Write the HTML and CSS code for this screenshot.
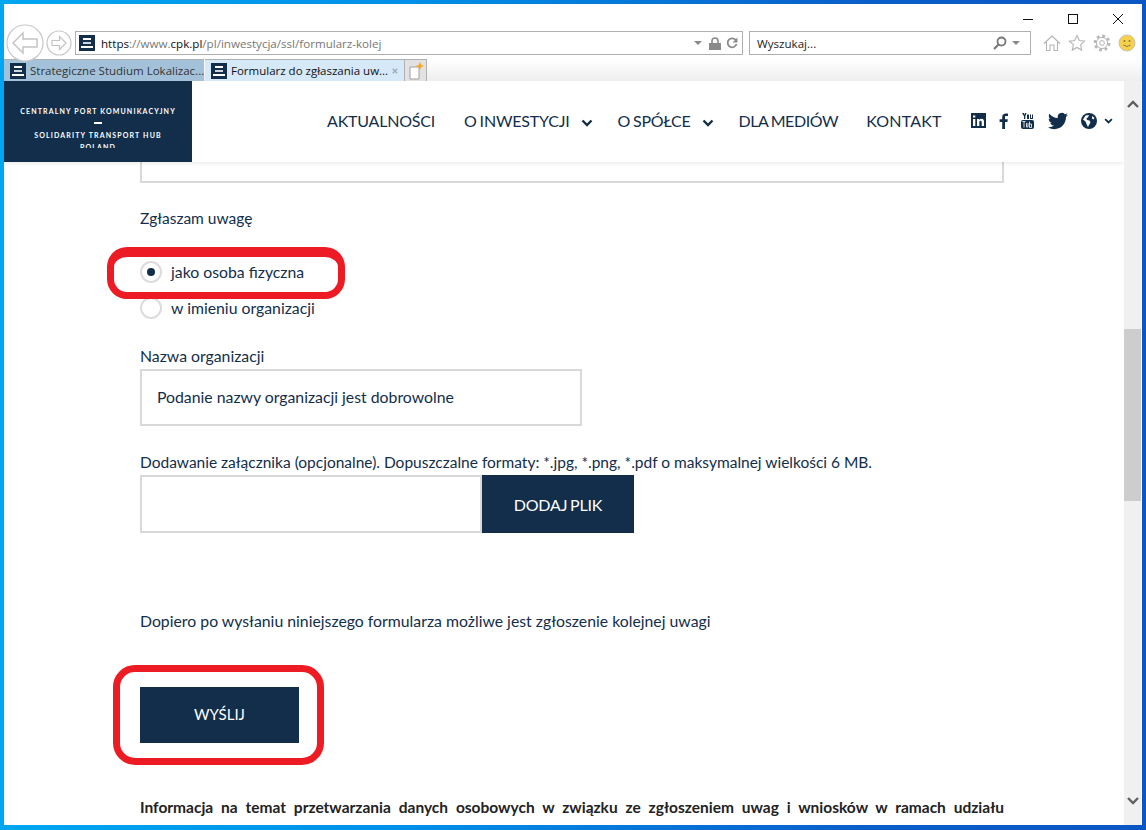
FILE: index.html
```html
<!DOCTYPE html>
<html lang="pl">

<head>
    <meta charset="UTF-8">
    <title>Formularz do zgłaszania uwag</title>
    <link rel="stylesheet" href="styles.css">
</head>

<body>
    <svg class="defs" width="0" height="0">
        <symbol id="favicon" viewBox="0 0 16 16">
            <rect width="16" height="16" fill="#122e4b" />
            <rect x="4" y="3" width="8" height="2" fill="#fff" />
            <rect x="4" y="7" width="8" height="2" fill="#cfd6dd" />
            <rect x="2" y="11" width="12" height="2" fill="#fff" />
        </symbol>
        <symbol id="chevron" viewBox="0 0 12 8">
            <path d="M1.5 1.5 6 6l4.5-4.5" fill="none" stroke="#122e4b" stroke-width="2.4" />
        </symbol>
    </svg>

    <div class="window">
        <!--browser toolbar-->
        <div class="chrome">
            <div class="caption">
                <svg class="caption-icon" viewBox="0 0 10 10"><path d="M0 5.5h10" stroke="#111" fill="none" /></svg>
                <svg class="caption-icon" viewBox="0 0 10 10"><rect x=".5" y=".5" width="9" height="9" stroke="#111" fill="none" /></svg>
                <svg class="caption-icon" viewBox="0 0 10 10"><path d="M0 0l10 10M10 0 0 10" stroke="#111" fill="none" /></svg>
            </div>
            <div class="toolbar">
                <svg class="nav-back" viewBox="0 0 38 38">
                    <circle cx="19" cy="19" r="18" fill="#fff" stroke="#c8c8c8" stroke-width="1.2" />
                    <path d="M7 19 17 9v6h14v8H17v6z" fill="#fff" stroke="#c4c4c4" stroke-width="1.5" />
                </svg>
                <svg class="nav-forward" viewBox="0 0 26 26">
                    <circle cx="13" cy="13" r="12" fill="#fff" stroke="#c8c8c8" stroke-width="1.2" />
                    <path d="M20 13l-6.500-6.500v4H6v5h7.500v4z" fill="#fff" stroke="#c4c4c4" stroke-width="1.2" />
                </svg>
                <div class="address">
                    <svg class="favicon"><use href="#favicon" /></svg>
                    <span class="url"><b>https</b>://www.<b>cpk.pl</b>/pl/inwestycja/ssl/formularz-kolej</span>
                    <span class="caret"></span>
                    <svg class="lock" viewBox="0 0 12 13">
                        <path d="M3 6V4a3 3 0 0 1 6 0v2" fill="none" stroke="#8a8a8a" stroke-width="1.6" />
                        <rect y="6" width="12" height="7" fill="#8a8a8a" />
                    </svg>
                    <svg class="reload" viewBox="0 0 12 12">
                        <path d="M10 3.500A4.500 4.500 0 1 0 10.500 7" fill="none" stroke="#8a8a8a" stroke-width="1.8" />
                        <path d="M11.500 .5v5h-5z" fill="#8a8a8a" />
                    </svg>
                </div>
                <div class="search">
                    <span class="search-text">Wyszukaj...</span>
                    <svg class="magnifier" viewBox="0 0 14 14">
                        <circle cx="8.500" cy="5.500" r="4" fill="none" stroke="#777" stroke-width="1.800" />
                        <path d="M5.500 8.500 1 13" stroke="#777" stroke-width="2.200" />
                    </svg>
                    <span class="caret"></span>
                </div>
                <div class="tools">
                    <svg class="tool" viewBox="0 0 18 18">
                        <path d="M1 9.500 9 2l8 7.500M3.500 8v8.500h3.500v-5.500h4v5.500h3.500V8" fill="none" stroke="#b5b5b5" stroke-width="1.100" />
                    </svg>
                    <svg class="tool" viewBox="0 0 18 18">
                        <path d="M9 1.500l2.300 5 5.300.6-4 3.600 1.100 5.400L9 13.400l-4.700 2.700 1.100-5.400-4-3.600 5.300-.6z" fill="#fff" stroke="#b5b5b5" stroke-width="1.100" />
                    </svg>
                    <svg class="tool" viewBox="0 0 18 18">
                        <circle cx="9" cy="9" r="7" fill="none" stroke="#b5b5b5" stroke-width="2.800" stroke-dasharray="2.700 2.800" />
                        <circle cx="9" cy="9" r="5.600" fill="#fff" stroke="#b5b5b5" stroke-width="1" />
                        <circle cx="9" cy="9" r="2.400" fill="#fff" stroke="#b5b5b5" stroke-width="1" />
                    </svg>
                    <svg class="tool" viewBox="0 0 18 18">
                        <circle cx="9" cy="9" r="8" fill="#f5d14e" stroke="#c9c4a8" />
                        <circle cx="6.500" cy="7" r="1" fill="#8a7a3a" />
                        <circle cx="11.500" cy="7" r="1" fill="#8a7a3a" />
                        <path d="M5.500 11q3.500 3 7 0" fill="none" stroke="#8a7a3a" />
                    </svg>
                </div>
            </div>
            <div class="tabs">
                <div class="tab tab-inactive">
                    <svg class="favicon"><use href="#favicon" /></svg>
                    <span class="tab-title">Strategiczne Studium Lokalizac...</span>
                </div>
                <div class="tab tab-active">
                    <svg class="favicon"><use href="#favicon" /></svg>
                    <span class="tab-title">Formularz do zgłaszania uw...</span>
                    <svg class="tab-close" viewBox="0 0 8 8"><path d="M1 1l6 6M7 1 1 7" stroke="#9fb0bd" stroke-width="2" /></svg>
                </div>
                <div class="tab-new">
                    <svg class="tab-new-icon" viewBox="0 0 18 18">
                        <path d="M3 5h9v12H3z" fill="#fff" stroke="#a0a0a0" />
                        <path d="M13 0l1.300 3L17.500 4l-3.200 1L13 8l-1.300-3L8.500 4l3.200-1z" fill="#f7a823" />
                    </svg>
                </div>
            </div>
        </div>

        <div class="viewport">
            <div class="page">
                <div class="site-header">
                    <div class="logo">
                        <div class="logo-text">
                            <div>CENTRALNY PORT KOMUNIKACYJNY</div>
                            <div class="logo-dash"></div>
                            <div>SOLIDARITY TRANSPORT HUB</div>
                            <div>POLAND</div>
                        </div>
                    </div>
                    <div class="menu">
                        <span class="menu-item">AKTUALNOŚCI</span>
                        <span class="menu-item">O INWESTYCJI <svg class="chevron"><use href="#chevron" /></svg></span>
                        <span class="menu-item">O SPÓŁCE <svg class="chevron"><use href="#chevron" /></svg></span>
                        <span class="menu-item menu-media">DLA MEDIÓW</span>
                        <span class="menu-item menu-contact">KONTAKT</span>
                    </div>
                    <div class="social">
                        <svg class="social-in" viewBox="0 0 15 15">
                            <rect width="15" height="15" fill="#122e4b" />
                            <path d="M2 6h2.300v7H2zM2 2.500h2.300v2H2zM6 6h2.200v1c.5-.8 1.300-1.200 2.300-1.200 1.800 0 2.500 1.200 2.500 3V13h-2.300V9.200c0-.9-.3-1.500-1.100-1.500-.9 0-1.300.7-1.300 1.600V13H6z" fill="#fff" />
                        </svg>
                        <svg class="social-f" viewBox="0 0 9 16">
                            <path d="M6 16V9h2.400l.4-2.800H6V4.400c0-.8.300-1.300 1.400-1.300H9V.6C8.700.5 7.800.5 6.800.5 4.700.5 3.200 1.800 3.200 4.100v2.100H.6V9h2.600v7z" fill="#122e4b" />
                        </svg>
                        <svg class="social-yt" viewBox="0 0 13 16">
                            <path d="M1 0h2l.5 2L4 0h1.500L4.300 3.300V6H3V3.300zM6 1.500h2v4.500H6zM9 1.500h1V5h1V1.500h1V6H9z" fill="#122e4b" />
                            <rect y="7" width="13" height="9" rx="2" fill="#122e4b" />
                            <path d="M1.500 8.500h3M3 8.500v6M5.500 10v4h1.500v-4M8.500 8.500v6M8.500 11h2v3.500h-2" fill="none" stroke="#fff" stroke-width=".8" />
                        </svg>
                        <svg class="social-tw" viewBox="0 0 24 24">
                            <path d="M23.953 4.570a10 10 0 0 1-2.825.775 4.958 4.958 0 0 0 2.163-2.723c-.951.555-2.005.959-3.127 1.184a4.920 4.920 0 0 0-8.384 4.482C7.690 8.095 4.067 6.130 1.640 3.162a4.822 4.822 0 0 0-.666 2.475c0 1.710.870 3.213 2.188 4.096a4.904 4.904 0 0 1-2.228-.616v.060a4.923 4.923 0 0 0 3.946 4.827 4.996 4.996 0 0 1-2.212.085 4.936 4.936 0 0 0 4.604 3.417 9.867 9.867 0 0 1-6.102 2.105c-.390 0-.779-.023-1.170-.067a13.995 13.995 0 0 0 7.557 2.209c9.053 0 13.998-7.496 13.998-13.985 0-.210 0-.420-.015-.630A9.935 9.935 0 0 0 24 4.590z" fill="#122e4b" />
                        </svg>
                        <svg class="social-globe" viewBox="0 0 16 16">
                            <circle cx="8" cy="8" r="8" fill="#122e4b" />
                            <path d="M4.500 2.500 8 2 7 4.500 5.500 5l.5 2 2.500.5 1 2-1.500 2.500-1 2L5.500 11 4.500 8.500 2 6.500zM11 3l2.500 2-1 1.500-1.500-1z" fill="#fff" />
                        </svg>
                        <svg class="social-chevron"><use href="#chevron" /></svg>
                    </div>
                </div>

                <div class="content">
                    <div class="clipped-field"></div>
                    <div class="label label-first">Zgłaszam uwagę</div>
                    <div class="radio-row radio-first">
                        <span class="radio radio-on"></span>
                        <span class="radio-label">jako osoba fizyczna</span>
                    </div>
                    <div class="radio-row">
                        <span class="radio"></span>
                        <span class="radio-label">w imieniu organizacji</span>
                    </div>
                    <div class="label label-org">Nazwa organizacji</div>
                    <div class="field field-org">Podanie nazwy organizacji jest dobrowolne</div>
                    <div class="label label-file">Dodawanie załącznika (opcjonalne). Dopuszczalne formaty: *.jpg, *.png, *.pdf o maksymalnej wielkości 6 MB.</div>
                    <div class="file-row">
                        <div class="field field-file"></div>
                        <div class="btn btn-file">DODAJ PLIK</div>
                    </div>
                    <div class="label label-note">Dopiero po wysłaniu niniejszego formularza możliwe jest zgłoszenie kolejnej uwagi</div>
                    <div class="btn btn-send">WYŚLIJ</div>
                    <div class="rodo">Informacja na temat przetwarzania danych osobowych w związku ze zgłoszeniem uwag i wniosków w ramach udziału</div>
                </div>
            </div>
            <div class="scrollbar">
                <svg class="scroll-arrow" viewBox="0 0 12 8"><path d="M1 7l5-5 5 5" fill="none" stroke="#606060" stroke-width="2.400" /></svg>
                <div class="scroll-thumb"></div>
                <svg class="scroll-arrow scroll-arrow-down" viewBox="0 0 12 8"><path d="M1 1l5 5 5-5" fill="none" stroke="#606060" stroke-width="2.400" /></svg>
            </div>
        </div>

        <!--red marks drawn over the screenshot-->
        <div class="mark mark-radio"></div>
        <div class="mark mark-send"></div>
    </div>
</body>

</html>
```

FILE: styles.css
```css
html,
body {
    margin: 0;
    height: 100%;
    overflow: hidden;
}

body {
    font-family: "Lato", "Liberation Sans", sans-serif;
    color: #122e4b;
}

.defs {
    position: absolute;
}

.window {
    position: relative;
    box-sizing: border-box;
    width: 1146px;
    height: 830px;
    padding: 4px 4px 5px;
    display: flex;
    flex-direction: column;
    background: linear-gradient(90deg, #00a6f0 0%, #0090ea 35%, #0a5fcb 75%, #0a56c4 100%);
}

/* browser toolbar */
.chrome {
    height: 77px;
    flex: none;
    display: flex;
    flex-direction: column;
    background: #fff;
    font-family: "Open Sans", "Liberation Sans", sans-serif;
}

.caption {
    height: 26px;
    display: flex;
    justify-content: flex-end;
    align-items: center;
    gap: 35px;
    padding: 3px 19px 0 0;
    box-sizing: border-box;
}

.caption-icon {
    width: 10px;
    height: 10px;
}

.toolbar {
    height: 26px;
    margin-bottom: 3px;
    display: flex;
    align-items: center;
    padding-left: 2px;
    position: relative;
}

.nav-back {
    width: 38px;
    height: 38px;
    flex: none;
}

.nav-forward {
    width: 26px;
    height: 26px;
    flex: none;
    margin: 0 3px 0 2px;
}

.address,
.search {
    box-sizing: border-box;
    height: 24px;
    border: 1px solid #b0b0b0;
    display: flex;
    align-items: center;
    font-size: 11.600px;
}

.address {
    width: 668px;
    padding: 0 4px 0 3px;
    margin-right: 6px;
    color: #777;
}

.address b {
    font-weight: 400;
    color: #111;
}

.url {
    margin-left: 6px;
    flex: 1;
}

.favicon {
    width: 16px;
    height: 16px;
    flex: none;
}

.caret {
    width: 0;
    height: 0;
    border: 4px solid transparent;
    border-top: 4px solid #888;
    border-bottom: 0;
}

.lock {
    width: 12px;
    height: 13px;
    margin-left: 7px;
}

.reload {
    width: 12px;
    height: 12px;
    margin-left: 5px;
}

.search {
    width: 282px;
    padding: 0 10px 0 7px;
}

.search-text {
    flex: 1;
    color: #222;
}

.magnifier {
    width: 14px;
    height: 14px;
    margin-right: 5px;
}

.tools {
    display: flex;
    align-items: center;
    gap: 7px;
    margin-left: 12px;
}

.tool {
    width: 18px;
    height: 18px;
}

.tabs {
    height: 22px;
    display: flex;
    background: linear-gradient(#fff, #eee);
    font-size: 11.500px;
}

.tab {
    box-sizing: border-box;
    height: 22px;
    display: flex;
    align-items: center;
    gap: 4px;
    padding-left: 6px;
    border-top: 1px solid #b0b0b0;
    white-space: nowrap;
}

.tab-inactive {
    width: 200px;
    background: #a3c2da;
    color: #333;
    margin-right: 1px;
}

.tab-active {
    width: 199px;
    background: #d6e9f8;
    color: #111;
}

.tab-title {
    flex: 1;
}

.tab-close {
    width: 8px;
    height: 8px;
    margin-right: 6px;
}

.tab-new {
    width: 23px;
    box-sizing: border-box;
    border: 1px solid #b0b0b0;
    border-bottom: 0;
    background: #e2e2e2;
    display: flex;
    align-items: center;
    justify-content: center;
}

.tab-new-icon {
    width: 18px;
    height: 18px;
}

/* site */
.viewport {
    flex: 1;
    min-height: 0;
    display: flex;
    background: #fff;
}

.page {
    flex: 1;
    min-width: 0;
    display: flex;
    flex-direction: column;
    overflow: hidden;
}

.site-header {
    height: 81px;
    flex: none;
    display: flex;
    align-items: center;
    background: #fff;
    box-shadow: 0 1px 4px rgba(0, 0, 0, 0.1);
    position: relative;
}

.logo {
    width: 188px;
    height: 81px;
    flex: none;
    background: #122e4b;
    color: #fff;
}

.logo-text {
    height: 43px;
    margin-top: 24px;
    overflow: hidden;
    text-align: center;
    font-size: 7px;
    font-weight: 700;
    line-height: 12px;
    letter-spacing: 1.160px;
}

.logo-dash {
    width: 8px;
    height: 2px;
    margin: 5px auto 5px;
    background: #fff;
}

.menu {
    margin-left: 135px;
    margin-top: -2px;
    display: flex;
    gap: 29px;
    font-size: 16px;
    letter-spacing: -0.2px;
    word-spacing: -1px;
    white-space: nowrap;
}

.menu-media {
    letter-spacing: -0.4px;
    margin-right: -1px;
}

.menu-contact {
    letter-spacing: 0.2px;
}

.chevron {
    width: 12px;
    height: 8px;
    margin: 0 -5px 0 9px;
}

.social {
    margin-left: 29px;
    margin-top: -2px;
    display: flex;
    align-items: center;
}

.social-in {
    width: 15px;
    height: 15px;
    margin-right: 13px;
}

.social-f {
    width: 9px;
    height: 16px;
    margin-right: 13px;
}

.social-yt {
    width: 13px;
    height: 16px;
    margin-right: 14px;
}

.social-tw {
    width: 20px;
    height: 20px;
    margin-right: 13px;
}

.social-globe {
    width: 16px;
    height: 16px;
    margin-right: 7px;
}

.social-chevron {
    width: 9px;
    height: 6px;
}

.content {
    padding-left: 136px;
    width: 864px;
    font-size: 15.800px;
}

.clipped-field {
    height: 21px;
    box-sizing: border-box;
    border: 2px solid #d8d8d8;
    border-top: 0;
}

.label {
    line-height: 20px;
    white-space: nowrap;
}

.label-first {
    margin-top: 25px;
    font-size: 15.500px;
}

.radio-row {
    height: 22px;
    display: flex;
    align-items: center;
    gap: 9px;
    margin-top: 14px;
}

.radio-first {
    margin-top: 33px;
}

.radio {
    box-sizing: border-box;
    width: 22px;
    height: 22px;
    border: 2px solid #dcdcdc;
    border-radius: 50%;
    display: flex;
    align-items: center;
    justify-content: center;
}

.radio-on::after {
    content: "";
    width: 8px;
    height: 8px;
    border-radius: 50%;
    background: #122e4b;
}

.radio-label {
    margin-top: -1px;
}

.label-org {
    margin-top: 27px;
}

.field {
    box-sizing: border-box;
    border: 2px solid #d8d8d8;
}

.field-org {
    width: 442px;
    height: 57px;
    margin-top: 3px;
    padding: 0 0 2px 15px;
    display: flex;
    align-items: center;
}

.label-file {
    margin-top: 26px;
    font-size: 15.500px;
}

.file-row {
    display: flex;
    margin-top: 3px;
}

.field-file {
    width: 342px;
    height: 58px;
}

.btn {
    background: #122e4b;
    color: #fff;
    display: flex;
    align-items: center;
    justify-content: center;
    font-size: 16px;
}

.btn-file {
    width: 152px;
    height: 58px;
    letter-spacing: -0.2px;
    word-spacing: -1px;
}

.label-note {
    margin-top: 78px;
}

.btn-send {
    box-sizing: border-box;
    width: 159px;
    height: 56px;
    margin-top: 56px;
    padding-bottom: 2px;
    font-size: 15px;
}

.rodo {
    margin-top: 54px;
    font-size: 15.500px;
    font-weight: 700;
    line-height: 20px;
    color: #222;
    text-align: justify;
    text-align-last: justify;
}

.scrollbar {
    width: 17px;
    flex: none;
    margin-right: 1px;
    display: flex;
    flex-direction: column;
    align-items: center;
    background: #f0f0f0;
}

.scroll-arrow {
    width: 12px;
    height: 8px;
    flex: none;
    margin-top: 19px;
}

.scroll-thumb {
    width: 100%;
    height: 172px;
    margin-top: 221px;
    background: #cdcdcd;
}

.scroll-arrow-down {
    margin-top: 296px;
}

/* red marks */
.mark {
    position: absolute;
    box-sizing: border-box;
    border: 7px solid #ed1c24;
}

.mark-radio {
    left: 107px;
    top: 247px;
    width: 238px;
    height: 52px;
    border-width: 10px 7px 7px;
    border-radius: 20px;
}

.mark-send {
    left: 113px;
    top: 665px;
    width: 211px;
    height: 100px;
    border-radius: 22px;
}
```
